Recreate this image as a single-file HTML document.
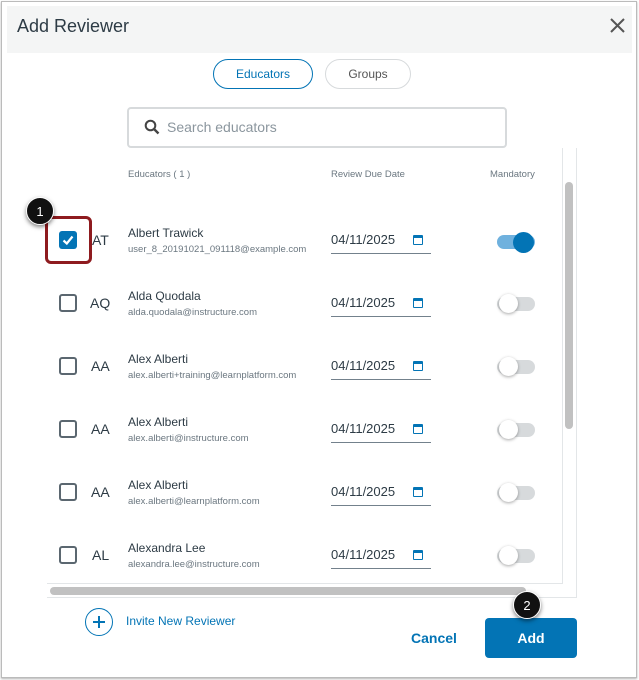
<!DOCTYPE html>
<html><head><style>
*{box-sizing:border-box;margin:0;padding:0}
body{width:639px;height:680px;background:#fff;font-family:"Liberation Sans",sans-serif;position:relative;overflow:hidden;color:#2d3b45}
.abs{position:absolute}
.frame{left:1px;top:1px;width:636px;height:677px;border:1px solid #bbb;box-shadow:0 1px 2px rgba(0,0,0,.3)}
.hdr{left:7px;top:6px;width:625px;height:47px;background:#f4f5f5}
.tab{height:30px;border-radius:15px;font-size:12px;text-align:center;line-height:28px}
.chk{width:18px;height:18px;border:2px solid #5b6770;border-radius:3px}
.ini{font-size:14px;color:#2d3b45}
.nm{font-size:12px;color:#2d3b45}
.em{font-size:9.5px;color:#6b7780}
.date{width:100px;height:23px;border-bottom:1px solid #73818c;font-size:13px;line-height:18px}
.cal{width:10px;height:10px;border:1.5px solid #0374b5;border-top-width:3px;border-radius:1px}
.tog{width:38px;height:14px;border-radius:7px;background:#d7dadc}
.knob{width:19px;height:19px;border-radius:50%;background:#fff;box-shadow:0 1px 3px rgba(0,0,0,.35)}
.badge{width:28px;height:28px;border-radius:50%;background:#111;color:#fff;font-size:13px;text-align:center;line-height:28px;box-shadow:0 2px 4px rgba(0,0,0,.5);border:1.5px solid #fff}
</style></head><body>
<div class="abs frame"></div>
<div class="abs hdr"></div>
<div class="abs" style="left:17px;top:16px;font-size:18px;color:#2d3b45">Add Reviewer</div>
<svg class="abs" style="left:610px;top:18px" width="15" height="15"><path d="M1 1L14 14M14 1L1 14" stroke="#555" stroke-width="2"/></svg>
<div class="abs tab" style="left:213px;top:59px;width:100px;border:1px solid #0374b5;color:#0374b5">Educators</div>
<div class="abs tab" style="left:325px;top:59px;width:86px;border:1px solid #d7dadc;color:#555">Groups</div>
<div class="abs" style="left:127px;top:107px;width:380px;height:41px;border:2px solid #d7dadc;border-radius:4px"></div>
<svg class="abs" style="left:144px;top:119px" width="16" height="16"><circle cx="6.5" cy="6.5" r="4.8" stroke="#444" stroke-width="2" fill="none"/><path d="M10 10L14.5 14.5" stroke="#444" stroke-width="2.4"/></svg>
<div class="abs" style="left:167px;top:119px;font-size:14px;color:#8b969e">Search educators</div>
<div class="abs" style="left:47px;top:148px;width:530px;height:450px;border-bottom:1px solid #e3e6e8;border-right:1px solid #e3e6e8"></div>
<div class="abs" style="left:47px;top:148px;width:516px;height:436px;border-right:1px solid #e3e6e8;border-bottom:1px solid #e3e6e8"></div>
<div class="abs" style="left:565px;top:182px;width:8px;height:247px;background:#c1c1c1;border-radius:4px"></div>
<div class="abs" style="left:50px;top:587px;width:476px;height:8px;background:#c1c1c1;border-radius:4px"></div>
<div class="abs" style="left:128px;top:169px;font-size:9.5px;color:#6b7780">Educators ( 1 )</div>
<div class="abs" style="left:331px;top:169px;font-size:9.5px;color:#6b7780">Review Due Date</div>
<div class="abs" style="left:490px;top:169px;font-size:9.5px;color:#6b7780">Mandatory</div>

<div class="abs" style="left:59px;top:231px;width:18px;height:18px;background:#0374b5;border-radius:3px"></div>
<svg class="abs" style="left:61px;top:233px" width="14" height="14"><path d="M2.5 7.5L5.8 10.5L11.5 3.5" stroke="#fff" stroke-width="2.2" fill="none"/></svg>
<div class="abs" style="left:45px;top:216px;width:47px;height:48px;border:3px solid #8e1b1f;border-radius:6px"></div>
<div class="abs badge" style="left:26px;top:197px">1</div>

<div class="abs ini" style="left:92px;top:232px">AT</div>
<div class="abs nm" style="left:128px;top:226px">Albert Trawick</div>
<div class="abs em" style="left:128px;top:244px">user_8_20191021_091118@example.com</div>
<div class="abs date" style="left:331px;top:231px">04/11/2025</div>
<div class="abs cal" style="left:413px;top:235px"></div>
<div class="abs tog" style="left:497px;top:235px;background:#6fb1de"></div>
<div class="abs" style="left:513px;top:232px;width:21px;height:21px;border-radius:50%;background:#0374b5"></div>

<div class="abs chk" style="left:59px;top:294px"></div>
<div class="abs ini" style="left:90px;top:295px">AQ</div>
<div class="abs nm" style="left:128px;top:289px">Alda Quodala</div>
<div class="abs em" style="left:128px;top:307px">alda.quodala@instructure.com</div>
<div class="abs date" style="left:331px;top:294px">04/11/2025</div>
<div class="abs cal" style="left:413px;top:298px"></div>
<div class="abs tog" style="left:497px;top:297px"></div><div class="abs knob" style="left:499px;top:294px"></div>

<div class="abs chk" style="left:59px;top:357px"></div>
<div class="abs ini" style="left:91px;top:358px">AA</div>
<div class="abs nm" style="left:128px;top:352px">Alex Alberti</div>
<div class="abs em" style="left:128px;top:370px">alex.alberti+training@learnplatform.com</div>
<div class="abs date" style="left:331px;top:357px">04/11/2025</div>
<div class="abs cal" style="left:413px;top:361px"></div>
<div class="abs tog" style="left:497px;top:360px"></div><div class="abs knob" style="left:499px;top:357px"></div>

<div class="abs chk" style="left:59px;top:420px"></div>
<div class="abs ini" style="left:91px;top:421px">AA</div>
<div class="abs nm" style="left:128px;top:415px">Alex Alberti</div>
<div class="abs em" style="left:128px;top:433px">alex.alberti@instructure.com</div>
<div class="abs date" style="left:331px;top:420px">04/11/2025</div>
<div class="abs cal" style="left:413px;top:424px"></div>
<div class="abs tog" style="left:497px;top:423px"></div><div class="abs knob" style="left:499px;top:420px"></div>

<div class="abs chk" style="left:59px;top:483px"></div>
<div class="abs ini" style="left:91px;top:484px">AA</div>
<div class="abs nm" style="left:128px;top:478px">Alex Alberti</div>
<div class="abs em" style="left:128px;top:496px">alex.alberti@learnplatform.com</div>
<div class="abs date" style="left:331px;top:483px">04/11/2025</div>
<div class="abs cal" style="left:413px;top:487px"></div>
<div class="abs tog" style="left:497px;top:486px"></div><div class="abs knob" style="left:499px;top:483px"></div>

<div class="abs chk" style="left:59px;top:546px"></div>
<div class="abs ini" style="left:92px;top:547px">AL</div>
<div class="abs nm" style="left:128px;top:541px">Alexandra Lee</div>
<div class="abs em" style="left:128px;top:559px">alexandra.lee@instructure.com</div>
<div class="abs date" style="left:331px;top:546px">04/11/2025</div>
<div class="abs cal" style="left:413px;top:550px"></div>
<div class="abs tog" style="left:497px;top:549px"></div><div class="abs knob" style="left:499px;top:546px"></div>

<div class="abs" style="left:85px;top:608px;width:28px;height:28px;border:1px solid #0374b5;border-radius:50%"></div>
<svg class="abs" style="left:85px;top:608px" width="28" height="28"><path d="M14 8V20M8 14H20" stroke="#0374b5" stroke-width="2"/></svg>
<div class="abs" style="left:126px;top:614px;font-size:12px;color:#0374b5">Invite New Reviewer</div>
<div class="abs" style="left:411px;top:630px;font-size:14px;font-weight:bold;color:#0374b5">Cancel</div>
<div class="abs" style="left:485px;top:618px;width:92px;height:40px;background:#0374b5;border-radius:4px;color:#fff;font-size:14px;font-weight:bold;text-align:center;line-height:40px">Add</div>
<div class="abs badge" style="left:513px;top:591px">2</div>
</body></html>
